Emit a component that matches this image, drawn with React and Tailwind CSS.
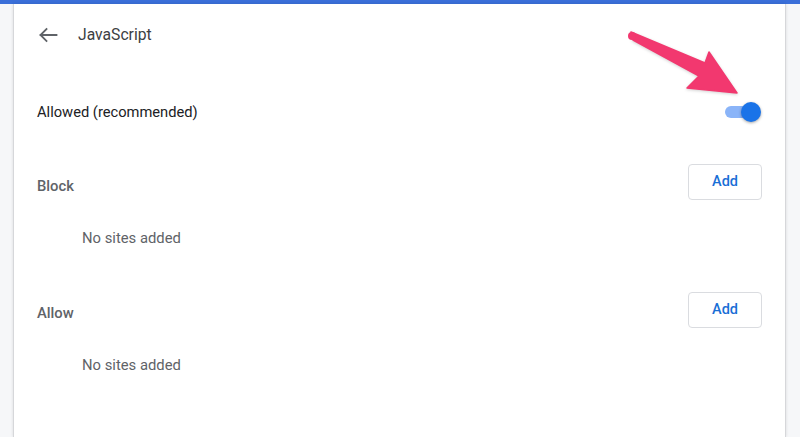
import React from "react";

function AddButton() {
  return (
    <button className="h-[36px] w-[74px] rounded-[4px] border border-[#dadce0] bg-white text-[14.5px] font-medium text-[#1a6fd6]">
      Add
    </button>
  );
}

export default function App() {
  return (
    <div
      className="relative flex h-[437px] w-[800px] flex-col overflow-hidden bg-[#f6f7f9]"
      style={{ fontFamily: "Roboto, 'Noto Sans', Arial, sans-serif" }}
    >
      <div className="h-[4px] w-full bg-[#3a6fd9]" />
      <div className="flex flex-1 pl-[13px] pr-[14px]">
        <div className="flex flex-1 flex-col border-x border-[#d6d7da] bg-white pl-[23px] pr-[23px] shadow-[0_0_3px_rgba(0,0,0,0.12)]">
          {/* header */}
          <div className="flex h-[62px] items-center">
            <svg width="20" height="16" viewBox="0 0 20 16" className="ml-[1px] text-[#5f6368]">
              <path d="M18.5 8H2.5M8.5 2L2.5 8L8.5 14" fill="none" stroke="currentColor" strokeWidth="1.8" strokeLinecap="square" />
            </svg>
            <span className="ml-[20px] text-[15.7px] text-[#3c4043]">JavaScript</span>
          </div>

          {/* Allowed row */}
          <div className="mt-[22px] flex h-[48px] items-center justify-between">
            <span className="text-[14.7px] text-[#202124]">Allowed (recommended)</span>
            <div className="relative mr-[1px] flex h-[20px] w-[36px] items-center">
              <div className="h-[12px] w-[33px] rounded-full bg-[#8ab4f8]" />
              <div className="absolute right-0 top-0 h-[20px] w-[20px] rounded-full bg-[#1a73e8] shadow-[0_1px_3px_rgba(0,0,0,0.35)]" />
            </div>
          </div>

          {/* Block */}
          <div className="mt-[28px] flex items-start justify-between">
            <span className="pt-[12px] text-[14.8px] font-medium leading-[20px] text-[#5f6368]">Block</span>
            <AddButton />
          </div>
          <div className="mt-[28px] pl-[45px] text-[14.8px] leading-[20px] text-[#5f6368]">No sites added</div>

          {/* Allow */}
          <div className="mt-[44px] flex items-start justify-between">
            <span className="pt-[11px] text-[14.8px] font-medium leading-[20px] text-[#5f6368]">Allow</span>
            <AddButton />
          </div>
          <div className="mt-[27px] pl-[45px] text-[14.8px] leading-[20px] text-[#5f6368]">No sites added</div>
        </div>
      </div>

      {/* annotation arrow */}
      <svg className="pointer-events-none absolute left-0 top-0" width="800" height="437" viewBox="0 0 800 437">
        <polygon
          points="631,32 705,63 709,52 737,93 687,88 699,76 633,40"
          fill="#f2386f"
          stroke="#f2386f"
          strokeWidth="1.5"
          strokeLinejoin="round"
          style={{ filter: "drop-shadow(0 1px 1.5px rgba(0,0,0,0.18))" }}
        />
        <circle cx="632" cy="36" r="4" fill="#f2386f" />
      </svg>
    </div>
  );
}
